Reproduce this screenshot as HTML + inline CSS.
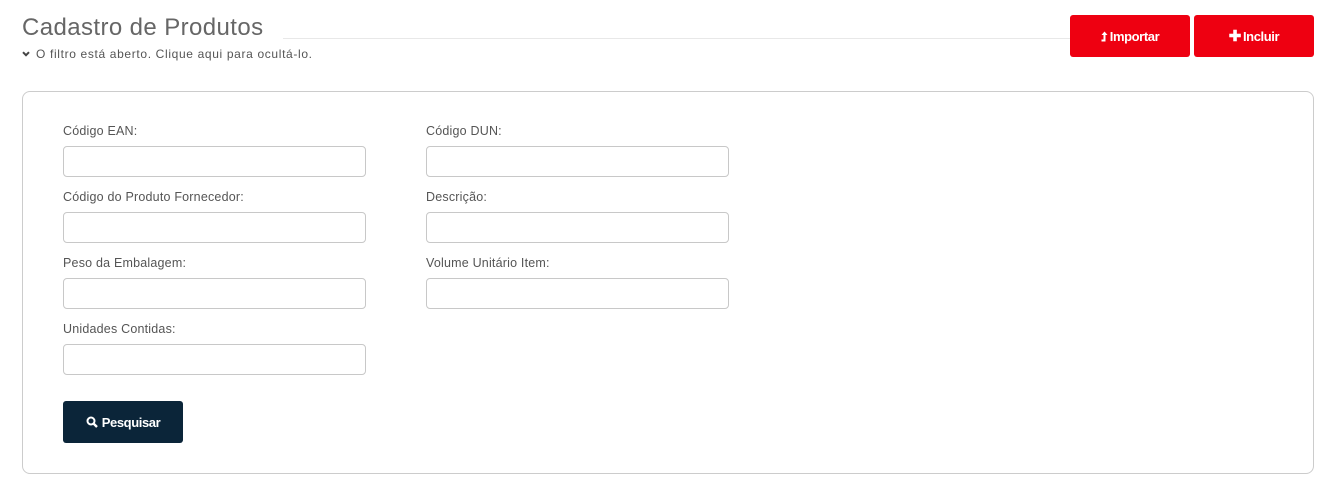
<!DOCTYPE html>
<html><head><meta charset="utf-8"><style>
body{margin:0;width:1341px;height:488px;background:#fff;font-family:"Liberation Sans",sans-serif;position:relative;overflow:hidden}
.a{position:absolute}
h1{position:absolute;left:22px;top:14px;margin:0;font-weight:normal;font-size:24px;color:#666;letter-spacing:0.4px}
.sub{left:22px;top:47px;font-size:12px;color:#555;letter-spacing:0.65px}
.hr{left:283px;top:38px;width:790px;height:1px;background:#e8e8e8}
.btn{border-radius:3px;color:#fff;font-weight:bold;font-size:13px;display:flex;align-items:center;justify-content:center;letter-spacing:-0.4px}
.red{background:#ee0011;top:15px;height:42px;width:120px}
.panel{left:22px;top:91px;width:1290px;height:381px;border:1px solid #ccc;border-radius:8px}
.lbl{font-size:12.5px;color:#555;letter-spacing:0.2px}
.in{width:301px;height:29px;border:1px solid #c8c8c8;border-radius:4px;background:#fff}
</style></head><body>
<h1>Cadastro de Produtos</h1>
<div class="a hr"></div>
<div class="a sub"><svg width="8" height="6" viewBox="0 0 8 6" style="margin-right:6px;vertical-align:1px"><path d="M1 1.2L4 4.2 7 1.2" stroke="#444" stroke-width="2" fill="none"/></svg>O filtro está aberto. Clique aqui para ocultá-lo.</div>
<div class="a btn red" style="left:1070px"><svg width="7" height="11" viewBox="0 0 7 11" style="margin-right:2px"><path d="M3.5 0.5L6.5 4H4.5V10.5H0.5V8.5H2.5V4H0.5Z" fill="#fff"/></svg>Importar</div>
<div class="a btn red" style="left:1194px"><span style="font-size:15px;margin-right:2px">✚</span>Incluir</div>
<div class="a panel"></div>
<div class="a lbl" style="left:63px;top:124px">Código EAN:</div>
<div class="a in" style="left:63px;top:146px"></div>
<div class="a lbl" style="left:426px;top:124px">Código DUN:</div>
<div class="a in" style="left:426px;top:146px"></div>
<div class="a lbl" style="left:63px;top:190px">Código do Produto Fornecedor:</div>
<div class="a in" style="left:63px;top:212px"></div>
<div class="a lbl" style="left:426px;top:190px">Descrição:</div>
<div class="a in" style="left:426px;top:212px"></div>
<div class="a lbl" style="left:63px;top:256px">Peso da Embalagem:</div>
<div class="a in" style="left:63px;top:278px"></div>
<div class="a lbl" style="left:426px;top:256px">Volume Unitário Item:</div>
<div class="a in" style="left:426px;top:278px"></div>
<div class="a lbl" style="left:63px;top:322px">Unidades Contidas:</div>
<div class="a in" style="left:63px;top:344px"></div>
<div class="a btn" style="left:63px;top:401px;width:120px;height:42px;background:#0b2539"><svg width="12" height="12" viewBox="0 0 12 12" style="margin-right:4px"><circle cx="5" cy="5" r="3.5" stroke="#fff" stroke-width="2" fill="none"/><path d="M7.5 7.5L11 11" stroke="#fff" stroke-width="2.4"/></svg>Pesquisar</div>
</body></html>
